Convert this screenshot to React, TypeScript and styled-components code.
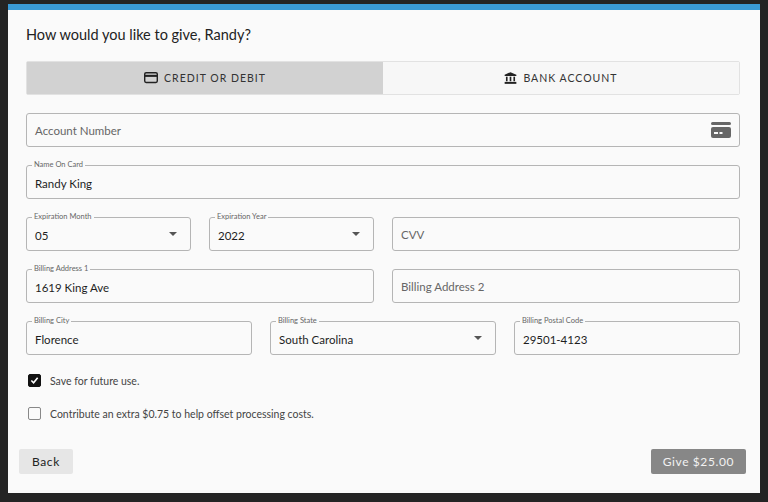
import styled, { createGlobalStyle } from 'styled-components';

const Global = createGlobalStyle`
  html, body { margin: 0; background: #242424; font-family: Lato, "Open Sans", sans-serif; }
`;

const Panel = styled.div`
  margin: 4px 8px 0;
  width: 752px;
  height: 489px;
  background: #fafafa;
  border-top: 6px solid #3a9ad5;
  box-sizing: border-box;
  display: flex;
  flex-direction: column;
`;

const Body = styled.div`
  padding: 14px 20px 0 18px;
  display: flex;
  flex-direction: column;
`;

const Heading = styled.h1`
  margin: 0 0 15px;
  font-size: 14.5px;
  font-weight: 400;
  color: #222;
  height: 22px;
  line-height: 22px;
`;

const Tabs = styled.div`
  display: flex;
  height: 34px;
  border: 1px solid #e2e2e2;
  border-radius: 2px;
  box-sizing: border-box;
  margin-bottom: 18px;
`;

const Tab = styled.div<{ $active?: boolean }>`
  flex: 1;
  display: flex;
  align-items: center;
  justify-content: center;
  gap: 6px;
  background: ${(p) => (p.$active ? '#d2d2d2' : '#f7f7f7')};
  font-size: 10.5px;
  letter-spacing: 1px;
  color: #333;
`;

const Row = styled.div<{ $cols: string }>`
  display: grid;
  grid-template-columns: ${(p) => p.$cols};
  gap: 18px;
  margin-bottom: 18px;
`;

const Field = styled.div`
  position: relative;
  height: 34px;
  border: 1px solid #b5b5b5;
  border-radius: 3px;
  box-sizing: border-box;
  display: flex;
  align-items: center;
  padding: 0 8px;
  font-size: 11.5px;
  color: #1e1e1e;
`;

const Legend = styled.span`
  position: absolute;
  top: -6px;
  left: 5px;
  padding: 0 2px;
  background: #fafafa;
  font-size: 7.5px;
  color: #666;
  line-height: 10px;
`;

const Value = styled.span`
  flex: 1;
  padding-top: 2px;
`;

const Placeholder = styled.span`
  flex: 1;
  color: #666;
`;

const Caret = styled.span`
  width: 0;
  height: 0;
  border-left: 4px solid transparent;
  border-right: 4px solid transparent;
  border-top: 4px solid #555;
  margin-right: 5px;
`;

const Check = styled.label`
  display: flex;
  align-items: center;
  gap: 9px;
  font-size: 10.5px;
  color: #444;
  margin: 0 0 20px 2px;
  height: 13px;
`;

const Box = styled.span<{ $on?: boolean }>`
  width: 11px;
  height: 11px;
  border-radius: 2px;
  border: 1px solid ${(p) => (p.$on ? '#111' : '#888')};
  background: ${(p) => (p.$on ? '#111' : 'transparent')};
  display: flex;
  align-items: center;
  justify-content: center;
`;

const Footer = styled.div`
  display: flex;
  justify-content: space-between;
  padding: 9px 14px 0 11px;
`;

const Button = styled.button<{ $primary?: boolean }>`
  height: 25px;
  border: none;
  border-radius: 2px;
  padding: 0 ${(p) => (p.$primary ? '12px' : '13px')};
  font-family: Lato, sans-serif;
  font-size: 12px;
  letter-spacing: 0.6px;
  background: ${(p) => (p.$primary ? '#878787' : '#e6e6e6')};
  color: ${(p) => (p.$primary ? '#f2f2f2' : '#222')};
`;

const CardIcon = ({ size = 14, color = '#222' }: { size?: number; color?: string }) => (
  <svg width={size} height={size * 0.8} viewBox="0 0 20 16">
    <rect x="1" y="1" width="18" height="14" rx="2" fill="none" stroke={color} strokeWidth="2" />
    <rect x="1" y="4" width="18" height="3" fill={color} />
  </svg>
);

const BankIcon = () => (
  <svg width="13" height="14" viewBox="0 0 20 20">
    <path d="M10 1 L19 5 V7 H1 V5 Z" fill="#222" />
    <rect x="3" y="8" width="2.5" height="7" fill="#222" />
    <rect x="8.75" y="8" width="2.5" height="7" fill="#222" />
    <rect x="14.5" y="8" width="2.5" height="7" fill="#222" />
    <rect x="1" y="16" width="18" height="3" fill="#222" />
  </svg>
);

const AccountIcon = () => (
  <svg width="20" height="16" viewBox="0 0 20 16">
    <rect x="0" y="0" width="20" height="3" rx="1.5" fill="#666" />
    <rect x="0" y="5" width="20" height="11" rx="2" fill="#666" />
    <rect x="3" y="10" width="4" height="2" fill="#fafafa" />
    <rect x="8.5" y="10" width="3" height="2" fill="#fafafa" />
  </svg>
);

export default function App() {
  return (
    <>
      <Global />
      <Panel>
        <Body>
          <Heading>How would you like to give, Randy?</Heading>
          <Tabs>
            <Tab $active>
              <CardIcon />
              CREDIT OR DEBIT
            </Tab>
            <Tab>
              <BankIcon />
              BANK ACCOUNT
            </Tab>
          </Tabs>
          <Row $cols="1fr">
            <Field>
              <Placeholder>Account Number</Placeholder>
              <AccountIcon />
            </Field>
          </Row>
          <Row $cols="1fr">
            <Field>
              <Legend>Name On Card</Legend>
              <Value>Randy King</Value>
            </Field>
          </Row>
          <Row $cols="165px 165px 1fr">
            <Field>
              <Legend>Expiration Month</Legend>
              <Value>05</Value>
              <Caret />
            </Field>
            <Field>
              <Legend>Expiration Year</Legend>
              <Value>2022</Value>
              <Caret />
            </Field>
            <Field>
              <Placeholder>CVV</Placeholder>
            </Field>
          </Row>
          <Row $cols="1fr 1fr">
            <Field>
              <Legend>Billing Address 1</Legend>
              <Value>1619 King Ave</Value>
            </Field>
            <Field>
              <Placeholder>Billing Address 2</Placeholder>
            </Field>
          </Row>
          <Row $cols="1fr 1fr 1fr">
            <Field>
              <Legend>Billing City</Legend>
              <Value>Florence</Value>
            </Field>
            <Field>
              <Legend>Billing State</Legend>
              <Value>South Carolina</Value>
              <Caret />
            </Field>
            <Field>
              <Legend>Billing Postal Code</Legend>
              <Value>29501-4123</Value>
            </Field>
          </Row>
          <Check style={{ marginTop: 1 }}>
            <Box $on>
              <svg width="9" height="9" viewBox="0 0 10 10">
                <path d="M1.5 5 L4 7.5 L8.5 2" fill="none" stroke="#fff" strokeWidth="1.8" />
              </svg>
            </Box>
            Save for future use.
          </Check>
          <Check>
            <Box />
            Contribute an extra $0.75 to help offset processing costs.
          </Check>
        </Body>
        <Footer>
          <Button>Back</Button>
          <Button $primary>Give $25.00</Button>
        </Footer>
      </Panel>
    </>
  );
}
